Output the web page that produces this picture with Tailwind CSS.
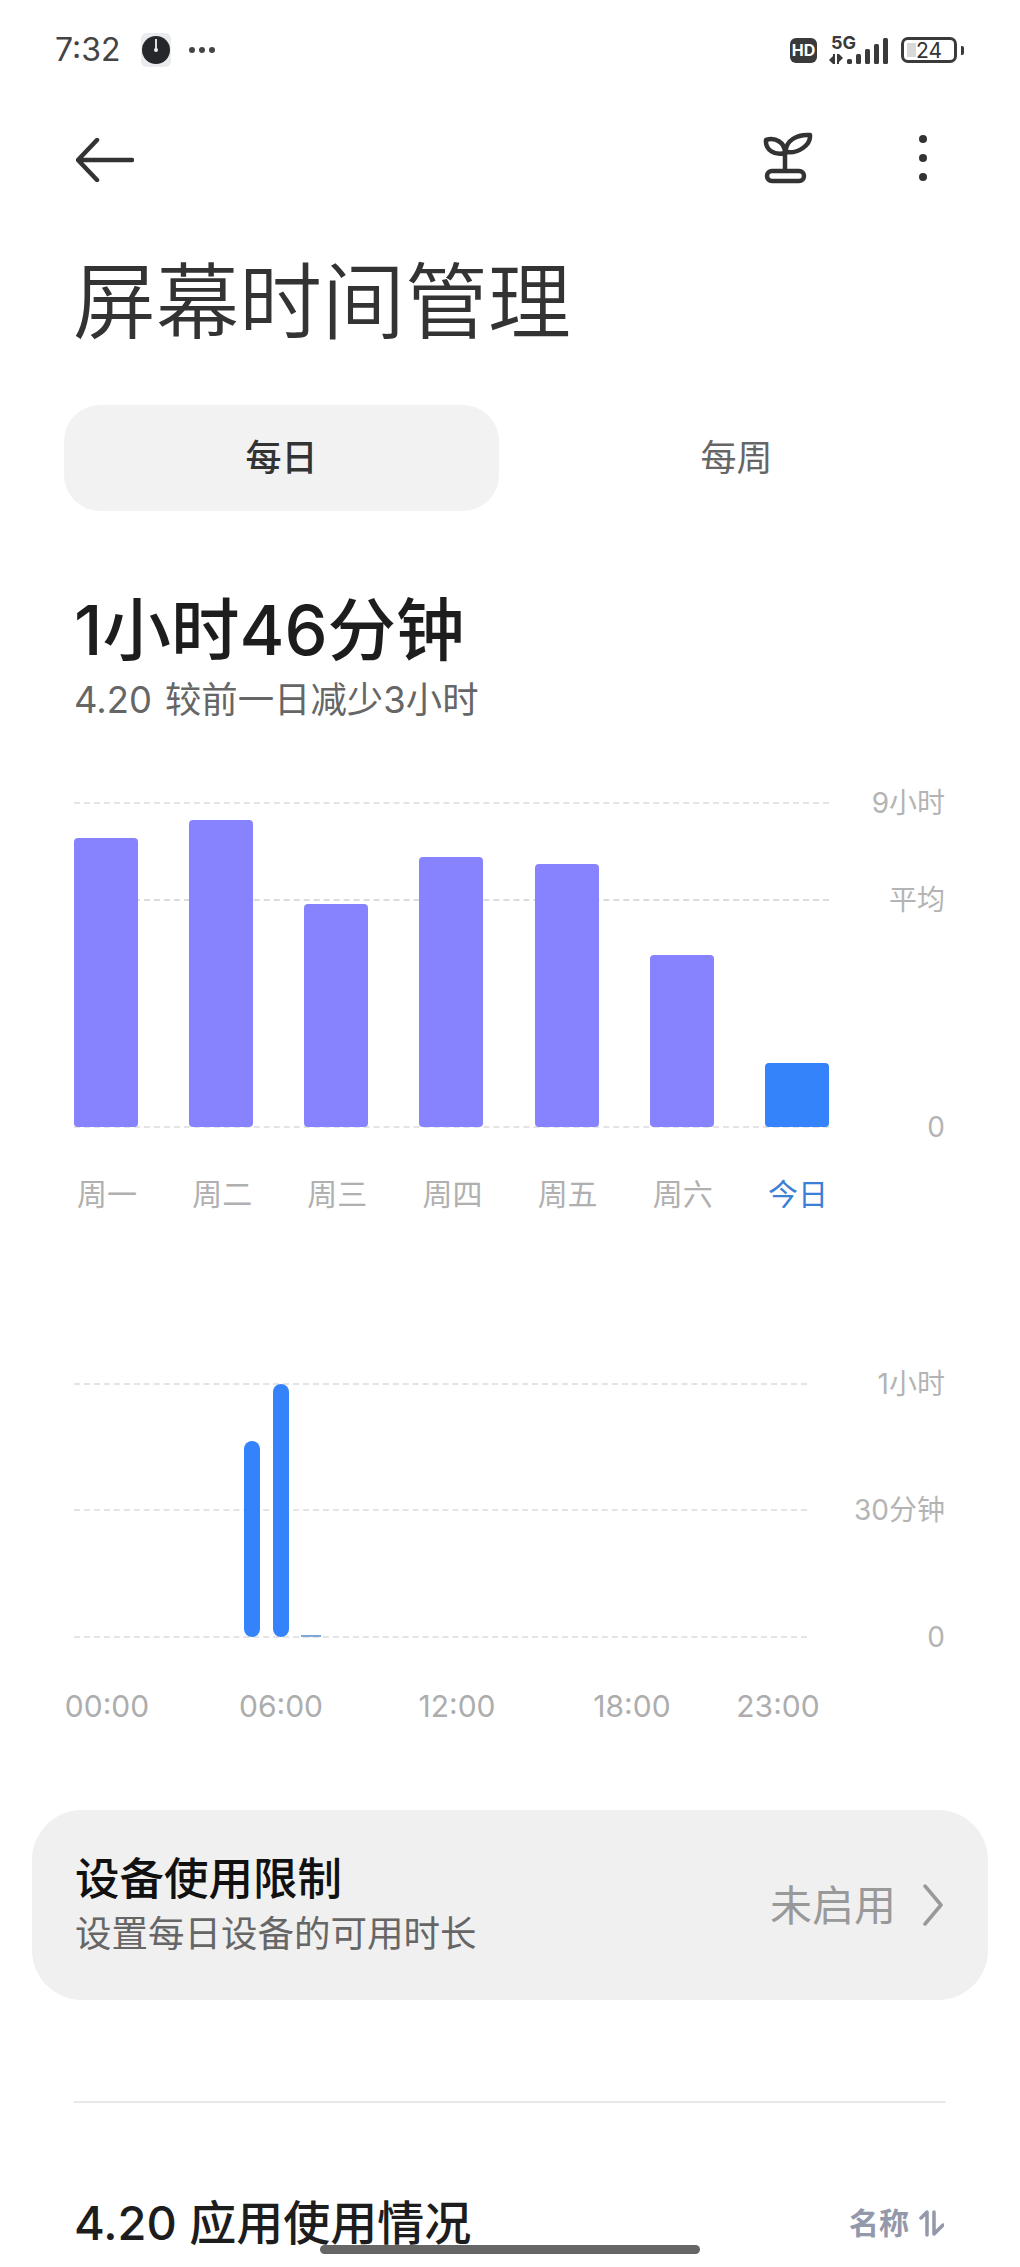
<!DOCTYPE html>
<html lang="zh-CN">
<head>
  <meta charset="UTF-8" />
  <title>屏幕时间管理</title>
  <script src="https://cdn.jsdelivr.net/npm/@tailwindcss/browser@4"></script>
</head>
<body class="bg-white font-['Inter','Noto_Sans_CJK_SC',sans-serif] text-[#333] overflow-hidden">
<div class="relative w-[1020px] h-[2267px] overflow-hidden">

  <!-- Status bar -->
  <div class="h-[100px] pl-[55px] pr-[56px] flex items-center justify-between">
    <div class="flex items-center">
      <span class="text-[32px] leading-none text-[#444]">7:32</span>
      <div class="ml-[20px] w-[30px] h-[34px] rounded-[6px] bg-[#e9ebef] flex items-center justify-center">
        <svg width="28" height="28" viewBox="0 0 28 28"><circle cx="14" cy="14" r="14" fill="#26272b"/><path d="M14 3v11" stroke="#ddd" stroke-width="2"/><circle cx="14" cy="14" r="2" fill="#eee"/></svg>
      </div>
      <div class="ml-[18px] flex gap-[4px]">
        <span class="w-[6px] h-[6px] rounded-full bg-[#444]"></span>
        <span class="w-[6px] h-[6px] rounded-full bg-[#444]"></span>
        <span class="w-[6px] h-[6px] rounded-full bg-[#444]"></span>
      </div>
    </div>
    <div class="flex items-center">
      <span class="w-[27px] h-[25px] rounded-[6px] bg-[#3a3a3a] text-white text-[16px] font-bold flex items-center justify-center">HD</span>
      <div class="ml-[12px] w-[59px] h-[28px] relative">
        <span class="absolute left-[2px] top-0 text-[18px] leading-[13px] font-bold text-[#3a3a3a]">5G</span>
        <svg class="absolute left-0 top-0" width="59" height="28" viewBox="0 0 59 28" fill="#3a3a3a">
          <path d="M4 18h2v10H4zM4 20v8L0 24zM8 18h2v10H8zM10 18l4 4-4 4z"/>
          <rect x="18" y="23" width="5" height="5" rx="1.500"/>
          <rect x="27" y="18" width="5" height="10" rx="1.500"/>
          <rect x="36" y="13" width="5" height="15" rx="1.500"/>
          <rect x="45" y="8" width="5" height="20" rx="1.500"/>
          <rect x="54" y="2" width="5" height="26" rx="1.500"/>
        </svg>
      </div>
      <div class="ml-[13px] w-[56px] h-[26px] rounded-[7px] border-[3px] border-[#3a3a3a] relative flex items-center justify-center">
        <span class="absolute left-[3px] top-[3px] bottom-[3px] w-[9px] bg-[#d8d8d8]"></span>
        <span class="relative text-[21px] leading-none text-[#333]">24</span>
      </div>
      <span class="ml-[4px] w-[3px] h-[9px] rounded-r-[2px] bg-[#3a3a3a]"></span>
    </div>
  </div>

  <!-- Nav -->
  <div class="h-[116px] pl-[76px] pr-[93px] flex items-center justify-between">
    <svg width="58" height="44" viewBox="0 0 58 44" fill="none" stroke="#333" stroke-width="4.500" stroke-linecap="round" stroke-linejoin="round" class="mt-[4px]"><path d="M56 22H3M21 2L2 22l19 20"/></svg>
    <div class="flex items-center">
      <svg width="50" height="52" viewBox="0 0 50 52" fill="none" stroke="#333" stroke-width="4.500" stroke-linejoin="round">
        <path d="M22 21C12 24 2 18 3 8 12 5 22 10 22 21Z"/>
        <path d="M23 20C22 9 34 2 47 3 48 13 35 22 23 20Z"/>
        <path d="M22 20V38"/>
        <rect x="4" y="39" width="37" height="10" rx="5"/>
      </svg>
      <div class="ml-[106px] flex flex-col gap-[11px]">
        <span class="w-[8px] h-[8px] rounded-full bg-[#333]"></span>
        <span class="w-[8px] h-[8px] rounded-full bg-[#333]"></span>
        <span class="w-[8px] h-[8px] rounded-full bg-[#333]"></span>
      </div>
    </div>
  </div>

  <!-- Title -->
  <h1 class="mt-[36px] pl-[73px] h-[100px] text-[83px] leading-[100px] font-[350] text-[#333]">屏幕时间管理</h1>

  <!-- Tabs -->
  <div class="mt-[53px] mx-[64px] h-[106px] flex items-center">
    <div class="w-[435px] h-full rounded-[36px] bg-[#f2f2f2] flex items-center justify-center text-[36px] font-medium text-[#333]">每日</div>
    <div class="flex-1 text-center text-[36px] text-[#666] pl-[18px]">每周</div>
  </div>

  <!-- Summary -->
  <div class="mt-[80px] pl-[74px] h-[80px] text-[68.500px] leading-[80px] font-medium text-[#1d1d1d]">1小时46分钟</div>
  <div class="mt-[4px] pl-[74px] h-[50px] text-[36.400px] leading-[50px] text-[#666]"><span class="mr-[13px]">4.20</span>较前一日减少3小时</div>

  <!-- Weekly chart -->
  <div class="mt-[78px] ml-[74px] mr-[75px] relative h-[324px]">
    <div class="absolute left-0 right-0 top-0 h-0 flex items-center justify-between">
      <div class="w-[755px] border-t-2 border-dashed border-[#e4e4e4]"></div>
      <span class="text-[28px] text-[#b4b4b4]">9小时</span>
    </div>
    <div class="absolute left-0 right-0 top-[97px] h-0 flex items-center justify-between">
      <div class="w-[755px] border-t-2 border-dashed border-[#dcdcdc]"></div>
      <span class="text-[28px] text-[#b4b4b4]">平均</span>
    </div>
    <div class="absolute left-0 right-0 top-[324px] h-0 flex items-center justify-between">
      <div class="w-[755px] border-t-2 border-dashed border-[#e4e4e4]"></div>
      <span class="text-[28px] text-[#b4b4b4]">0</span>
    </div>
    <div class="relative w-[755px] h-full flex items-end justify-between">
      <div class="w-[64px] h-[289px] rounded-[4px] bg-[#8783ff]"></div>
      <div class="w-[64px] h-[307px] rounded-[4px] bg-[#8783ff]"></div>
      <div class="w-[64px] h-[223px] rounded-[4px] bg-[#8783ff]"></div>
      <div class="w-[64px] h-[270px] rounded-[4px] bg-[#8783ff]"></div>
      <div class="w-[64px] h-[263px] rounded-[4px] bg-[#8783ff]"></div>
      <div class="w-[64px] h-[172px] rounded-[4px] bg-[#8783ff]"></div>
      <div class="w-[64px] h-[64px] rounded-[4px] bg-[#3483fb]"></div>
    </div>
  </div>
  <div class="mt-[47px] ml-[75px] w-[755px] h-[40px] flex justify-between text-[30px] leading-[40px] text-[#b0b0b0]">
    <span class="w-[64px] whitespace-nowrap flex justify-center">周一</span>
    <span class="w-[64px] whitespace-nowrap flex justify-center">周二</span>
    <span class="w-[64px] whitespace-nowrap flex justify-center">周三</span>
    <span class="w-[64px] whitespace-nowrap flex justify-center">周四</span>
    <span class="w-[64px] whitespace-nowrap flex justify-center">周五</span>
    <span class="w-[64px] whitespace-nowrap flex justify-center">周六</span>
    <span class="w-[64px] whitespace-nowrap flex justify-center text-[#3b7fd6]">今日</span>
  </div>

  <!-- Hourly chart -->
  <div class="mt-[170px] ml-[74px] mr-[75px] relative h-[253px]">
    <div class="absolute left-0 right-0 top-0 h-0 flex items-center justify-between">
      <div class="w-[733px] border-t-2 border-dashed border-[#e4e4e4]"></div>
      <span class="text-[28px] text-[#b4b4b4]">1小时</span>
    </div>
    <div class="absolute left-0 right-0 top-[126px] h-0 flex items-center justify-between">
      <div class="w-[733px] border-t-2 border-dashed border-[#e4e4e4]"></div>
      <span class="text-[28px] text-[#b4b4b4]">30分钟</span>
    </div>
    <div class="absolute left-0 right-0 top-[253px] h-0 flex items-center justify-between">
      <div class="w-[733px] border-t-2 border-dashed border-[#e4e4e4]"></div>
      <span class="text-[28px] text-[#b4b4b4]">0</span>
    </div>
    <div class="relative h-full pl-[170px] flex items-end">
      <div class="w-[16px] h-[196px] rounded-[8px] bg-[#3483fb]"></div>
      <div class="ml-[13px] w-[16px] h-[253px] rounded-[8px] bg-[#3483fb]"></div>
      <div class="ml-[12px] w-[20px] h-[2px] bg-[#7ea8dc]"></div>
    </div>
  </div>
  <div class="mt-[49px] h-[40px] text-[30px] leading-[40px] text-[#adadad] flex">
    <span class="ml-[62px] w-[90px] text-center">00:00</span>
    <span class="ml-[84px] w-[90px] text-center">06:00</span>
    <span class="ml-[86px] w-[90px] text-center">12:00</span>
    <span class="ml-[85px] w-[90px] text-center">18:00</span>
    <span class="ml-[56px] w-[90px] text-center">23:00</span>
  </div>

  <!-- Device limit card -->
  <div class="mt-[84px] mx-[32px] h-[190px] rounded-[50px] bg-[#f0f0f0] pl-[43px] pr-[45px] flex items-center justify-between">
    <div>
      <div class="text-[44.500px] leading-[56px] font-medium text-[#111]">设备使用限制</div>
      <div class="mt-[2px] text-[36.500px] leading-[50px] text-[#666]">设置每日设备的可用时长</div>
    </div>
    <div class="flex items-center">
      <span class="text-[42px] text-[#999]">未启用</span>
      <svg class="ml-[27px]" width="20" height="42" viewBox="0 0 20 42" fill="none" stroke="#999" stroke-width="3.500" stroke-linecap="round" stroke-linejoin="round"><path d="M2 2l16 19L2 40"/></svg>
    </div>
  </div>

  <!-- Divider -->
  <div class="mt-[101px] mx-[74px] h-[2px] bg-[#e8e8e8]"></div>

  <!-- App usage header -->
  <div class="mt-[90px] ml-[74px] mr-[76px] h-[60px] flex items-center justify-between">
    <span class="text-[47px] leading-[60px] font-medium text-[#1d1d1d]">4.20 应用使用情况</span>
    <div class="flex items-center">
      <span class="text-[30px] font-bold text-[#9398ab]">名称</span>
      <svg class="ml-[9px]" width="26" height="28" viewBox="0 0 26 28" fill="none" stroke="#9398ab" stroke-width="3.500" stroke-linecap="round" stroke-linejoin="round"><path d="M9 26V3L3 9M16 3V25L25 16"/></svg>
    </div>
  </div>

  <!-- Home indicator -->
  <div class="absolute left-[320px] top-[2245px] w-[380px] h-[9px] rounded-full bg-[#666]"></div>
</div>
</body>
</html>
